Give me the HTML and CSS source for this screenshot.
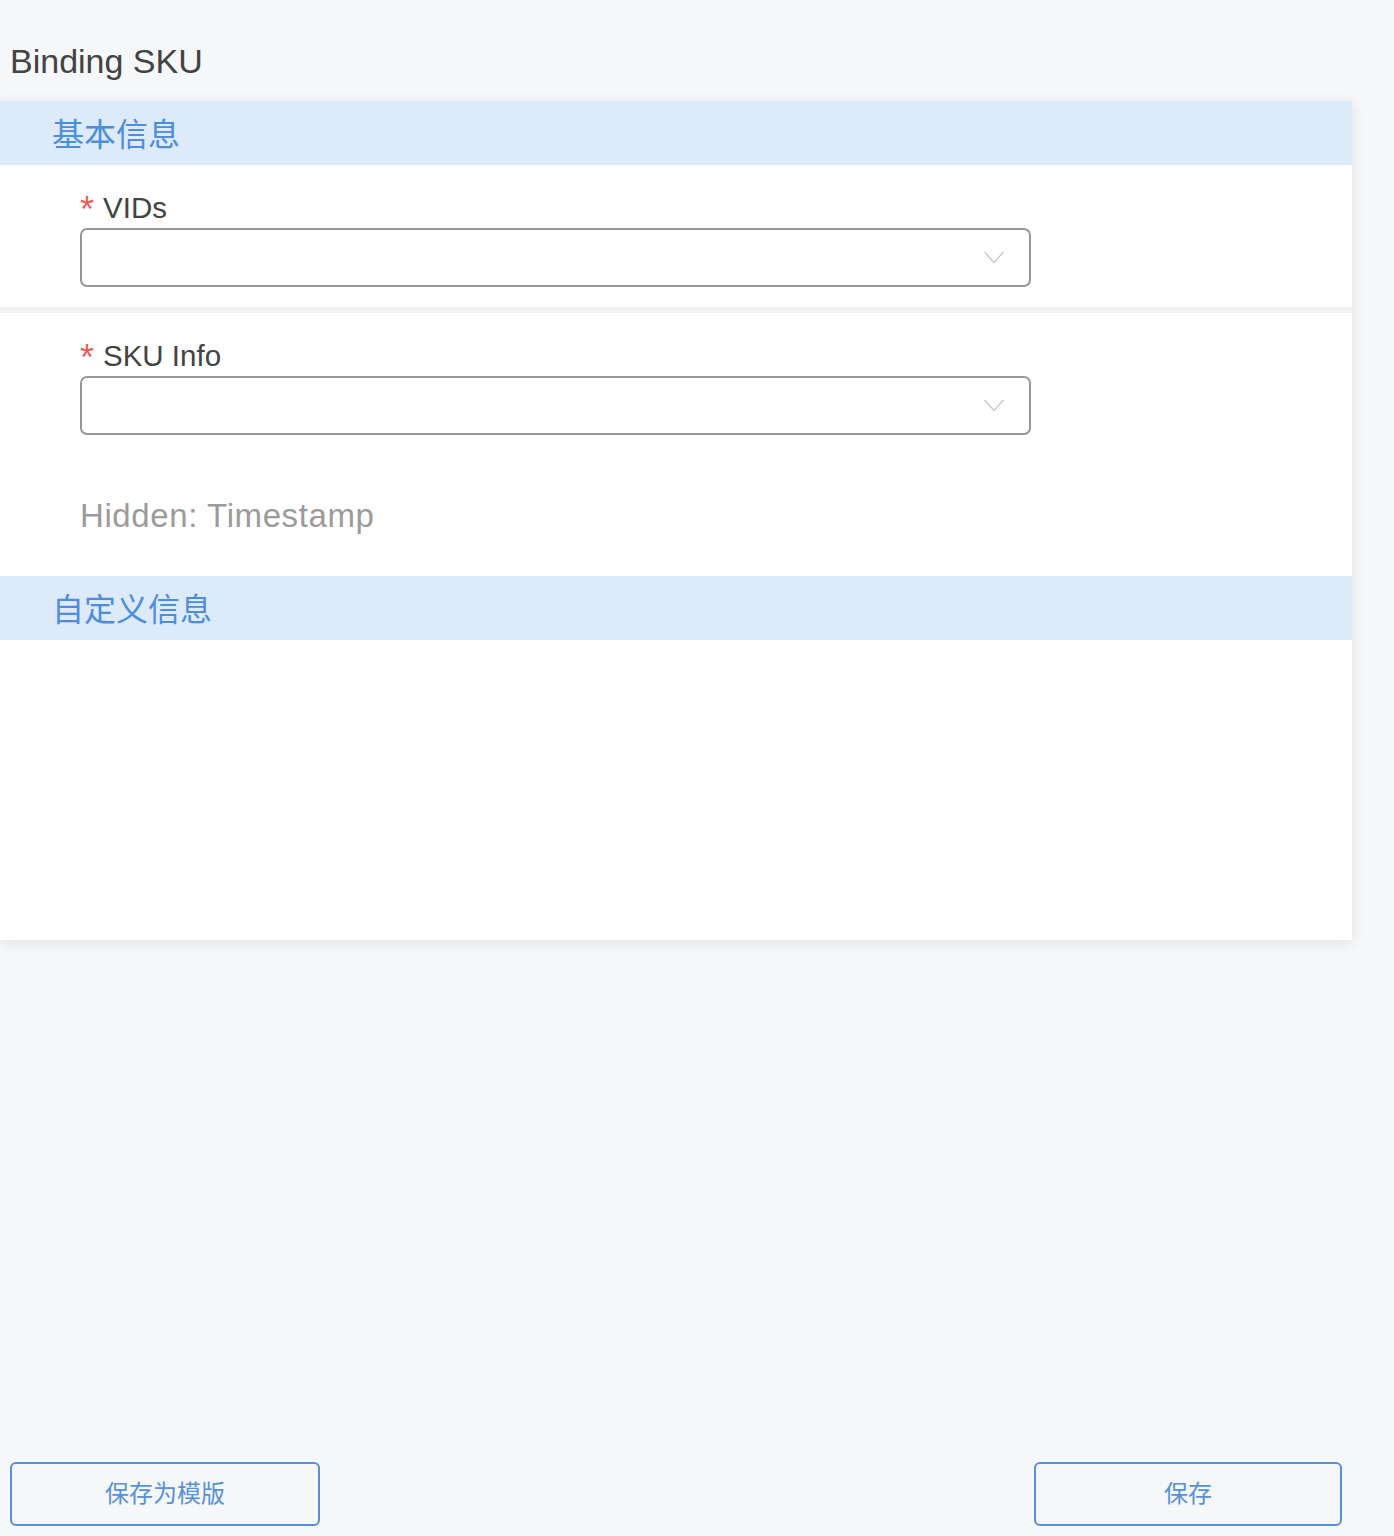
FILE: index.html
```html
<!DOCTYPE html>
<html lang="zh-CN">
<head>
<meta charset="utf-8">
<title>Binding SKU</title>
<link rel="stylesheet" href="styles.css">
</head>
<body>
<div class="page">
  <h1 class="page-title">Binding SKU</h1>
  <div class="card">
    <div class="section-head">基本信息</div>
    <div class="form-item">
      <div class="label"><span class="req">*</span>VIDs</div>
      <div class="select">
        <svg class="chevron" width="22" height="13" viewBox="0 0 22 13"><path d="M1.5 1 L11 11.5 L20.5 1" fill="none" stroke="#c3c6cc" stroke-width="1.3"/></svg>
      </div>
    </div>
    <div class="divider"></div>
    <div class="form-item">
      <div class="label"><span class="req">*</span>SKU Info</div>
      <div class="select">
        <svg class="chevron" width="22" height="13" viewBox="0 0 22 13"><path d="M1.5 1 L11 11.5 L20.5 1" fill="none" stroke="#c3c6cc" stroke-width="1.3"/></svg>
      </div>
    </div>
    <div class="hidden-field">Hidden: Timestamp</div>
    <div class="section-head">自定义信息</div>
    <div class="custom-body"></div>
  </div>
  <div class="footer">
    <button class="btn btn-wide">保存为模版</button>
    <button class="btn">保存</button>
  </div>
</div>
</body>
</html>
```

FILE: styles.css
```css
* { box-sizing: border-box; }
html, body { margin: 0; padding: 0; }
body {
  background: #f6f7f9;
  font-family: "Liberation Sans", "Noto Sans CJK SC", sans-serif;
  color: #434343;
}
.page {
  min-height: 1536px;
  display: flex;
  flex-direction: column;
}
.page-title {
  margin: 0;
  height: 101px;
  padding: 41px 0 0 10px;
  font-size: 34px;
  line-height: 40px;
  font-weight: normal;
  color: #434343;
}
.card {
  width: 1352px;
  background: #fff;
  box-shadow: 0 3px 14px rgba(0, 0, 0, 0.09);
  display: flex;
  flex-direction: column;
}
.section-head {
  height: 64px;
  background: #dceafa;
  padding-left: 52px;
  font-size: 32px;
  line-height: 62px;
  color: #4d8ddb;
  font-family: "Noto Sans CJK SC", sans-serif;
}
.form-item {
  padding: 23px 0 20px 80px;
}
.label {
  display: flex;
  align-items: baseline;
  font-size: 29.5px;
  line-height: 36px;
  height: 36px;
  margin-bottom: 4px;
  color: #434343;
}
.req {
  color: #e8605c;
  font-size: 36px;
  margin-right: 9px;
  line-height: 36px;
  position: relative;
  top: 4px;
}
.select {
  width: 951px;
  height: 59px;
  border: 2px solid #979797;
  border-radius: 7px;
  display: flex;
  align-items: center;
  justify-content: flex-end;
  padding-right: 24px;
}
.chevron { display: block; }
.divider {
  height: 6px;
  background: #f2f2f3;
}
.hidden-field {
  padding: 41px 0 40px 80px;
  font-size: 33px;
  letter-spacing: 0.6px;
  line-height: 40px;
  color: #9b9b9b;
}
.custom-body { height: 300px; }
.footer {
  margin-top: auto;
  display: flex;
  justify-content: space-between;
  padding: 0 52px 10px 10px;
}
.btn {
  width: 308px;
  height: 64px;
  border: 2px solid #5590da;
  border-radius: 6px;
  background: transparent;
  color: #5590da;
  font-family: "Noto Sans CJK SC", sans-serif;
  font-size: 24px;
  padding: 0 0 5px;
}
.btn-wide { width: 310px; }
```
